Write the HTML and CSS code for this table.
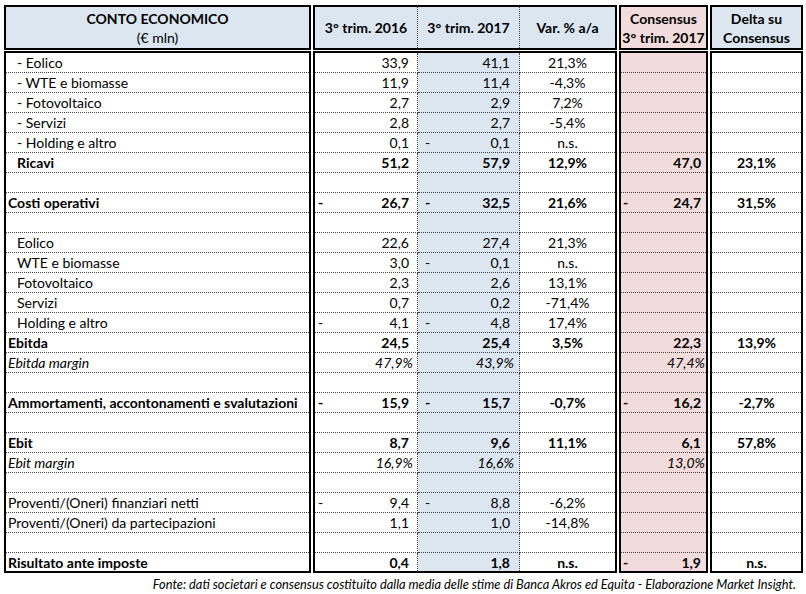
FILE: index.html
```html
<!DOCTYPE html>
<html lang="it">
<head>
<meta charset="utf-8">
<title>Conto economico</title>
<link rel="stylesheet" href="styles.css">
</head>
<body>
<div class="report">
  <div class="sheet">
    <div class="group group--label">
      <div class="head head--label">
        <div class="head__title">CONTO ECONOMICO</div>
        <div class="head__sub">(€ mln)</div>
      </div>
      <div class="body">
        <div class="row"><div class="cell cell--l1">- Eolico</div></div>
        <div class="row"><div class="cell cell--l1">- WTE e biomasse</div></div>
        <div class="row"><div class="cell cell--l1">- Fotovoltaico</div></div>
        <div class="row"><div class="cell cell--l1">- Servizi</div></div>
        <div class="row"><div class="cell cell--l1">- Holding e altro</div></div>
        <div class="row row--bold"><div class="cell cell--l1">Ricavi</div></div>
        <div class="row"><div class="cell"></div></div>
        <div class="row row--bold"><div class="cell">Costi operativi</div></div>
        <div class="row"><div class="cell"></div></div>
        <div class="row"><div class="cell cell--l1">Eolico</div></div>
        <div class="row"><div class="cell cell--l1">WTE e biomasse</div></div>
        <div class="row"><div class="cell cell--l1">Fotovoltaico</div></div>
        <div class="row"><div class="cell cell--l1">Servizi</div></div>
        <div class="row"><div class="cell cell--l1">Holding e altro</div></div>
        <div class="row row--bold"><div class="cell">Ebitda</div></div>
        <div class="row row--italic"><div class="cell">Ebitda margin</div></div>
        <div class="row"><div class="cell"></div></div>
        <div class="row row--bold"><div class="cell">Ammortamenti, accontonamenti e svalutazioni</div></div>
        <div class="row"><div class="cell"></div></div>
        <div class="row row--bold"><div class="cell">Ebit</div></div>
        <div class="row row--italic"><div class="cell">Ebit margin</div></div>
        <div class="row"><div class="cell"></div></div>
        <div class="row"><div class="cell">Proventi/(Oneri) finanziari netti</div></div>
        <div class="row"><div class="cell">Proventi/(Oneri) da partecipazioni</div></div>
        <div class="row"><div class="cell"></div></div>
        <div class="row row--bold"><div class="cell">Risultato ante imposte</div></div>
      </div>
    </div>

    <div class="group group--main">
      <div class="head head--main">
        <div class="hcell hcell--sep">3° trim. 2016</div>
        <div class="hcell hcell--sep">3° trim. 2017</div>
        <div class="hcell">Var. % a/a</div>
      </div>
      <div class="body">
        <div class="row row--main"><div class="cell num a"><span class="val">33,9</span></div><div class="cell num b"><span class="val">41,1</span></div><div class="cell pct">21,3%</div></div>
        <div class="row row--main"><div class="cell num a"><span class="val">11,9</span></div><div class="cell num b"><span class="val">11,4</span></div><div class="cell pct">-4,3%</div></div>
        <div class="row row--main"><div class="cell num a"><span class="val">2,7</span></div><div class="cell num b"><span class="val">2,9</span></div><div class="cell pct">7,2%</div></div>
        <div class="row row--main"><div class="cell num a"><span class="val">2,8</span></div><div class="cell num b"><span class="val">2,7</span></div><div class="cell pct">-5,4%</div></div>
        <div class="row row--main"><div class="cell num a"><span class="val">0,1</span></div><div class="cell num b"><span class="minus">-</span><span class="val">0,1</span></div><div class="cell pct">n.s.</div></div>
        <div class="row row--main row--bold"><div class="cell num a"><span class="val">51,2</span></div><div class="cell num b"><span class="val">57,9</span></div><div class="cell pct">12,9%</div></div>
        <div class="row row--main"><div class="cell num a"></div><div class="cell num b"></div><div class="cell pct"></div></div>
        <div class="row row--main row--bold"><div class="cell num a"><span class="minus">-</span><span class="val">26,7</span></div><div class="cell num b"><span class="minus">-</span><span class="val">32,5</span></div><div class="cell pct">21,6%</div></div>
        <div class="row row--main"><div class="cell num a"></div><div class="cell num b"></div><div class="cell pct"></div></div>
        <div class="row row--main"><div class="cell num a"><span class="val">22,6</span></div><div class="cell num b"><span class="val">27,4</span></div><div class="cell pct">21,3%</div></div>
        <div class="row row--main"><div class="cell num a"><span class="val">3,0</span></div><div class="cell num b"><span class="minus">-</span><span class="val">0,1</span></div><div class="cell pct">n.s.</div></div>
        <div class="row row--main"><div class="cell num a"><span class="val">2,3</span></div><div class="cell num b"><span class="val">2,6</span></div><div class="cell pct">13,1%</div></div>
        <div class="row row--main"><div class="cell num a"><span class="val">0,7</span></div><div class="cell num b"><span class="val">0,2</span></div><div class="cell pct">-71,4%</div></div>
        <div class="row row--main"><div class="cell num a"><span class="minus">-</span><span class="val">4,1</span></div><div class="cell num b"><span class="minus">-</span><span class="val">4,8</span></div><div class="cell pct">17,4%</div></div>
        <div class="row row--main row--bold"><div class="cell num a"><span class="val">24,5</span></div><div class="cell num b"><span class="val">25,4</span></div><div class="cell pct">3,5%</div></div>
        <div class="row row--main row--italic"><div class="cell num a"><span class="val val--pct">47,9%</span></div><div class="cell num b"><span class="val val--pct">43,9%</span></div><div class="cell pct"></div></div>
        <div class="row row--main"><div class="cell num a"></div><div class="cell num b"></div><div class="cell pct"></div></div>
        <div class="row row--main row--bold"><div class="cell num a"><span class="minus">-</span><span class="val">15,9</span></div><div class="cell num b"><span class="minus">-</span><span class="val">15,7</span></div><div class="cell pct">-0,7%</div></div>
        <div class="row row--main"><div class="cell num a"></div><div class="cell num b"></div><div class="cell pct"></div></div>
        <div class="row row--main row--bold"><div class="cell num a"><span class="val">8,7</span></div><div class="cell num b"><span class="val">9,6</span></div><div class="cell pct">11,1%</div></div>
        <div class="row row--main row--italic"><div class="cell num a"><span class="val val--pct">16,9%</span></div><div class="cell num b"><span class="val val--pct">16,6%</span></div><div class="cell pct"></div></div>
        <div class="row row--main"><div class="cell num a"></div><div class="cell num b"></div><div class="cell pct"></div></div>
        <div class="row row--main"><div class="cell num a"><span class="minus">-</span><span class="val">9,4</span></div><div class="cell num b"><span class="minus">-</span><span class="val">8,8</span></div><div class="cell pct">-6,2%</div></div>
        <div class="row row--main"><div class="cell num a"><span class="val">1,1</span></div><div class="cell num b"><span class="val">1,0</span></div><div class="cell pct">-14,8%</div></div>
        <div class="row row--main"><div class="cell num a"></div><div class="cell num b"></div><div class="cell pct"></div></div>
        <div class="row row--main row--bold"><div class="cell num a"><span class="val">0,4</span></div><div class="cell num b"><span class="val">1,8</span></div><div class="cell pct">n.s.</div></div>
      </div>
    </div>

    <div class="group group--cons">
      <div class="head head--cons">
        <div class="head__title">Consensus</div>
        <div class="head__title">3° trim. 2017</div>
      </div>
      <div class="body body--cons">
        <div class="row"><div class="cell num c"></div></div>
        <div class="row"><div class="cell num c"></div></div>
        <div class="row"><div class="cell num c"></div></div>
        <div class="row"><div class="cell num c"></div></div>
        <div class="row"><div class="cell num c"></div></div>
        <div class="row row--bold"><div class="cell num c"><span class="val">47,0</span></div></div>
        <div class="row"><div class="cell num c"></div></div>
        <div class="row row--bold"><div class="cell num c"><span class="minus">-</span><span class="val">24,7</span></div></div>
        <div class="row"><div class="cell num c"></div></div>
        <div class="row"><div class="cell num c"></div></div>
        <div class="row"><div class="cell num c"></div></div>
        <div class="row"><div class="cell num c"></div></div>
        <div class="row"><div class="cell num c"></div></div>
        <div class="row"><div class="cell num c"></div></div>
        <div class="row row--bold"><div class="cell num c"><span class="val">22,3</span></div></div>
        <div class="row row--italic"><div class="cell num c"><span class="val val--pct">47,4%</span></div></div>
        <div class="row"><div class="cell num c"></div></div>
        <div class="row row--bold"><div class="cell num c"><span class="minus">-</span><span class="val">16,2</span></div></div>
        <div class="row"><div class="cell num c"></div></div>
        <div class="row row--bold"><div class="cell num c"><span class="val">6,1</span></div></div>
        <div class="row row--italic"><div class="cell num c"><span class="val val--pct">13,0%</span></div></div>
        <div class="row"><div class="cell num c"></div></div>
        <div class="row"><div class="cell num c"></div></div>
        <div class="row"><div class="cell num c"></div></div>
        <div class="row"><div class="cell num c"></div></div>
        <div class="row row--bold"><div class="cell num c"><span class="minus">-</span><span class="val">1,9</span></div></div>
      </div>
    </div>

    <div class="group group--delta">
      <div class="head head--cons">
        <div class="head__title">Delta su</div>
        <div class="head__title">Consensus</div>
      </div>
      <div class="body">
        <div class="row"><div class="cell pct"></div></div>
        <div class="row"><div class="cell pct"></div></div>
        <div class="row"><div class="cell pct"></div></div>
        <div class="row"><div class="cell pct"></div></div>
        <div class="row"><div class="cell pct"></div></div>
        <div class="row row--bold"><div class="cell pct">23,1%</div></div>
        <div class="row"><div class="cell pct"></div></div>
        <div class="row row--bold"><div class="cell pct">31,5%</div></div>
        <div class="row"><div class="cell pct"></div></div>
        <div class="row"><div class="cell pct"></div></div>
        <div class="row"><div class="cell pct"></div></div>
        <div class="row"><div class="cell pct"></div></div>
        <div class="row"><div class="cell pct"></div></div>
        <div class="row"><div class="cell pct"></div></div>
        <div class="row row--bold"><div class="cell pct">13,9%</div></div>
        <div class="row"><div class="cell pct"></div></div>
        <div class="row"><div class="cell pct"></div></div>
        <div class="row row--bold"><div class="cell pct">-2,7%</div></div>
        <div class="row"><div class="cell pct"></div></div>
        <div class="row row--bold"><div class="cell pct">57,8%</div></div>
        <div class="row"><div class="cell pct"></div></div>
        <div class="row"><div class="cell pct"></div></div>
        <div class="row"><div class="cell pct"></div></div>
        <div class="row"><div class="cell pct"></div></div>
        <div class="row"><div class="cell pct"></div></div>
        <div class="row row--bold"><div class="cell pct">n.s.</div></div>
      </div>
    </div>
  </div>
  <p class="note">Fonte: dati societari e consensus costituito dalla media delle stime di Banca Akros ed Equita - Elaborazione Market Insight.</p>
</div>
</body>
</html>
```

FILE: styles.css
```css
* {
  box-sizing: border-box;
  margin: 0;
  padding: 0;
}

html,
body {
  background: #ffffff;
}

body {
  font-family: Lato, "Liberation Sans", sans-serif;
  font-size: 14px;
  color: #000000;
}

.report {
  width: 806px;
  padding: 5px 0 0 4px;
}

.sheet {
  display: flex;
  gap: 2px;
}

.group {
  display: flex;
  flex-direction: column;
  gap: 1px;
}

.group--label { width: 307px; }
.group--main { width: 304px; }
.group--cons { width: 89px; }
.group--delta { width: 93px; }

.head {
  height: 45px;
  border: 2px solid #000;
  background: #dce6f1;
  font-weight: 700;
}

.head--label,
.head--cons {
  display: flex;
  flex-direction: column;
  align-items: center;
  justify-content: center;
  line-height: 19px;
  padding-top: 1px;
}

.group--cons .head {
  background: #f2dcdb;
}

.head__sub {
  font-weight: 400;
}

.head--main {
  display: grid;
  grid-template-columns: 103px 102px 95px;
}

.hcell {
  display: flex;
  align-items: center;
  justify-content: center;
}

.hcell--sep {
  border-right: 1px dotted #444;
}

.body {
  height: 522px;
  border: 2px solid #000;
  display: flex;
  flex-direction: column;
}

.body--cons {
  background: #f2dcdb;
}

.row {
  display: grid;
  height: 20px;
  flex: none;
}

.row:last-child {
  height: 18px;
}

.row--main {
  grid-template-columns: 103px 102px 95px;
}

.row--bold {
  font-weight: 700;
}

.row--italic {
  font-style: italic;
}

.cell {
  display: flex;
  align-items: center;
  border-bottom: 1px dotted #444;
  padding-left: 2px;
  white-space: nowrap;
}

.row:last-child .cell {
  border-bottom: 0;
}

.cell--l1 {
  padding-left: 11px;
}

.num {
  padding: 0 8px 0 3px;
}

.num.a {
  border-right: 1px dotted #444;
}

.num.b {
  background: #dce6f1;
  border-right: 1px dotted #444;
  padding-left: 7px;
  padding-right: 9px;
}

.num.c {
  padding-left: 2px;
  padding-right: 5px;
}

.val {
  margin-left: auto;
}

.val--pct {
  margin-right: -4px;
}

.pct {
  justify-content: center;
  padding-left: 0;
}

.note {
  margin-top: 2px;
  padding-right: 10px;
  text-align: right;
  font-style: italic;
  font-size: 12.8px;
  line-height: 18px;
}
```
